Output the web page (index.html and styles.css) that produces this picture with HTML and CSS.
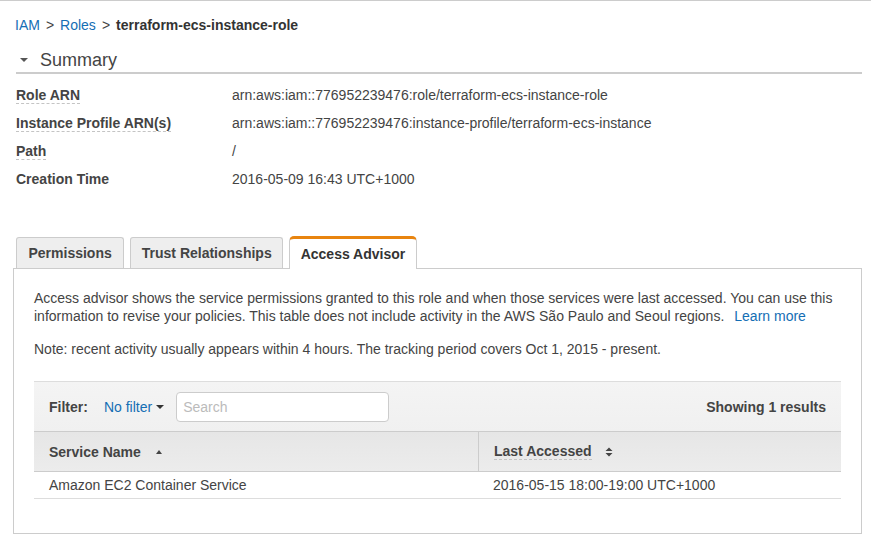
FILE: index.html
```html
<!DOCTYPE html>
<html lang="en">
<head>
<meta charset="utf-8">
<title>terraform-ecs-instance-role</title>
<link rel="stylesheet" href="styles.css">
</head>
<body>
<div class="page">
  <div class="crumbs"><a class="link">IAM</a><span class="sep">&gt;</span><a class="link">Roles</a><span class="sep">&gt;</span><b class="current">terraform-ecs-instance-role</b></div>

  <div class="summary-head"><span class="caret-down"></span><span>Summary</span></div>

  <div class="props">
    <div class="prop"><div class="prop-label"><span class="dashed">Role ARN</span></div><div class="prop-value">arn:aws:iam::776952239476:role/terraform-ecs-instance-role</div></div>
    <div class="prop"><div class="prop-label"><span class="dashed">Instance Profile ARN(s)</span></div><div class="prop-value">arn:aws:iam::776952239476:instance-profile/terraform-ecs-instance</div></div>
    <div class="prop"><div class="prop-label"><span class="dashed">Path</span></div><div class="prop-value">/</div></div>
    <div class="prop"><div class="prop-label"><span>Creation Time</span></div><div class="prop-value">2016-05-09 16:43 UTC+1000</div></div>
  </div>

  <div class="tabs">
    <div class="tab tab-first">Permissions</div>
    <div class="tab">Trust Relationships</div>
    <div class="tab tab-active">Access Advisor</div>
  </div>

  <div class="panel">
    <p class="intro">Access advisor shows the service permissions granted to this role and when those services were last accessed. You can use this information to revise your policies. This table does not include activity in the AWS São Paulo and Seoul regions.<a class="link learn">Learn more</a></p>
    <p class="note">Note: recent activity usually appears within 4 hours. The tracking period covers Oct 1, 2015 - present.</p>

    <div class="table">
      <div class="filter-bar">
        <span class="filter-label">Filter:</span>
        <span class="filter-menu"><a class="link">No filter</a><span class="caret-small"></span></span>
        <input class="search" type="text" placeholder="Search">
        <span class="results">Showing 1 results</span>
      </div>
      <div class="thead">
        <div class="th">Service Name<span class="sort-up"></span></div>
        <div class="th th-sep"><span class="dashed">Last Accessed</span><svg class="sort-both" width="8" height="10" viewBox="0 0 8 10"><path d="M0.5 4 L4 0.5 L7.5 4 Z M0.5 6 L4 9.5 L7.5 6 Z" fill="#444"/></svg></div>
      </div>
      <div class="trow">
        <div class="td">Amazon EC2 Container Service</div>
        <div class="td">2016-05-15 18:00-19:00 UTC+1000</div>
      </div>
    </div>
  </div>
</div>
</body>
</html>
```

FILE: styles.css
```css
* { box-sizing: border-box; }

body {
  margin: 0;
  font-family: "Liberation Sans", Arial, Helvetica, sans-serif;
  font-size: 14px;
  color: #444;
  background: #fff;
}

.page {
  border-top: 1px solid #ccc;
  padding: 0 9px 0 13px;
}

.link { color: #146eb4; cursor: pointer; }
.learn { display: inline-block; margin-left: 10px; }

.crumbs {
  height: 33px;
  padding: 15px 0 0 2px;
  line-height: 18px;
}
.crumbs .sep { margin: 0 6px; color: #444; }
.crumbs .current { color: #333; }

.summary-head {
  display: flex;
  align-items: center;
  height: 26px;
  margin: 14px 0 0 3px;
  padding-left: 4px;
  border-bottom: 2px solid #ccc;
  font-size: 18px;
  line-height: 24px;
  color: #444;
}
.caret-down {
  width: 0; height: 0;
  border-left: 4px solid transparent;
  border-right: 4px solid transparent;
  border-top: 4px solid #555;
  margin-right: 12px;
}

.props { margin: 7px 0 0 3px; }
.prop { display: flex; align-items: center; height: 28px; }
.prop-label { width: 216px; flex: none; font-weight: bold; color: #444; }
.dashed { border-bottom: 1px dashed #c4c4c4; }
.prop-value { color: #444; }

.tabs {
  display: flex;
  align-items: flex-end;
  gap: 6px;
  margin: 43px 0 0 3px;
}
.tab {
  height: 31px;
  padding: 0 10.5px;
  display: flex;
  align-items: center;
  background: #eee;
  border: 1px solid #ccc;
  border-bottom: none;
  border-radius: 3px 3px 0 0;
  font-weight: bold;
  color: #444;
}
.tab-first { padding: 0 11.5px; }
.tab-active {
  position: relative;
  height: 33px;
  margin-bottom: -1px;
  padding-bottom: 1px;
  background: #fff;
  border-top: 3px solid #e8840f;
  border-radius: 5px 5px 0 0;
  color: #333;
}

.panel {
  border: 1px solid #ccc;
  padding: 20px 20px 34px;
}
.intro, .note { margin: 0; line-height: 18px; color: #444; }
.note { margin-top: 15px; }

.table { margin-top: 23px; }

.filter-bar {
  display: flex;
  align-items: center;
  height: 50px;
  padding: 0 15px;
  border-top: 1px solid #ddd;
  background: linear-gradient(#f4f4f4, #f0f0f0);
}
.filter-label { font-weight: bold; color: #444; }
.filter-menu { display: flex; align-items: center; margin-left: 16px; }
.caret-small {
  width: 0; height: 0;
  margin-left: 4px;
  border-left: 4px solid transparent;
  border-right: 4px solid transparent;
  border-top: 4px solid #333;
}
.search {
  width: 213px;
  height: 30px;
  margin: 0 0 0 12px;
  padding: 0 6px;
  border: 1px solid #ccc;
  border-radius: 4px;
  background: #fff;
  font: 14px "Liberation Sans", Arial, sans-serif;
  color: #444;
  outline: none;
}
.search::placeholder { color: #bbb; }
.results { margin-left: auto; font-weight: bold; color: #444; }

.thead, .trow {
  display: grid;
  grid-template-columns: 444px 1fr;
}
.thead {
  height: 41px;
  border-top: 1px solid #ccc;
  border-bottom: 1px solid #ccc;
  background: linear-gradient(#e6e6e6, #ececec);
}
.th {
  display: flex;
  align-items: center;
  padding-left: 15px;
  font-weight: bold;
  color: #444;
}
.th-sep { border-left: 1px solid #ccc; }
.sort-up {
  width: 0; height: 0;
  margin-left: 15px;
  border-left: 3.5px solid transparent;
  border-right: 3.5px solid transparent;
  border-bottom: 4px solid #444;
}
.sort-both { margin-left: 13px; }

.trow {
  height: 27px;
  border-bottom: 1px solid #ddd;
}
.td {
  display: flex;
  align-items: center;
  padding-left: 15px;
  color: #444;
}
```
